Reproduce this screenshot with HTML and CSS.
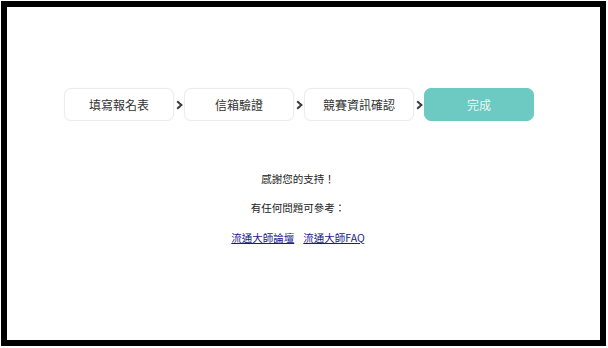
FILE: index.html
```html
<!DOCTYPE html>
<html lang="zh-Hant">
<head>
<meta charset="utf-8">
<link rel="stylesheet" href="styles.css">
</head>
<body>
<div class="frame">
  <div class="steps">
    <div class="step">填寫報名表</div>
    <div class="arrow"><svg width="7" height="10" viewBox="0 0 7 10"><path d="M1.2 1.2 L5.4 5 L1.2 8.8" fill="none" stroke="#3a3a3a" stroke-width="2"/></svg></div>
    <div class="step">信箱驗證</div>
    <div class="arrow"><svg width="7" height="10" viewBox="0 0 7 10"><path d="M1.2 1.2 L5.4 5 L1.2 8.8" fill="none" stroke="#3a3a3a" stroke-width="2"/></svg></div>
    <div class="step">競賽資訊確認</div>
    <div class="arrow"><svg width="7" height="10" viewBox="0 0 7 10"><path d="M1.2 1.2 L5.4 5 L1.2 8.8" fill="none" stroke="#3a3a3a" stroke-width="2"/></svg></div>
    <div class="step step-active">完成</div>
  </div>
  <div class="message">
    <p class="line thanks">感謝您的支持！</p>
    <p class="line ask">有任何問題可參考：</p>
    <p class="line links"><a href="#">流通大師論壇</a><a href="#">流通大師FAQ</a></p>
  </div>
</div>
</body>
</html>
```
FILE: styles.css
```css
html, body {
  margin: 0;
  padding: 0;
  background: #fff;
}
body {
  font-family: "Noto Sans CJK TC", "Noto Sans", sans-serif;
  color: #333;
}
.frame {
  margin: 1px;
  width: 605px;
  height: 345px;
  box-sizing: border-box;
  border: 6px solid #000;
  background: #fff;
}
.steps {
  display: flex;
  align-items: center;
  margin-top: 81px;
  padding-left: 57px;
}
.step {
  width: 110px;
  height: 33px;
  box-sizing: border-box;
  border: 1px solid #ececec;
  border-radius: 7px;
  background: #fff;
  display: flex;
  align-items: center;
  justify-content: center;
  font-size: 12px;
  color: #333;
  box-shadow: 0 0 2px rgba(0,0,0,0.04);
}
.step-active {
  background: #6ccac2;
  border-color: #6ccac2;
  color: #eaf7f5;
}
.arrow {
  width: 10px;
  display: flex;
  justify-content: center;
  align-items: center;
}
.arrow svg {
  display: block;
}
.message {
  padding-right: 11px;
  text-align: center;
  font-size: 10.5px;
  color: #222;
}
.line {
  margin: 0;
  line-height: 16px;
}
.thanks {
  margin-top: 50px;
}
.ask {
  margin-top: 13px;
}
.links {
  margin-top: 14px;
}
.links a {
  color: #1a1a8c;
  text-decoration: underline;
}
.links a + a {
  margin-left: 9px;
}
```
